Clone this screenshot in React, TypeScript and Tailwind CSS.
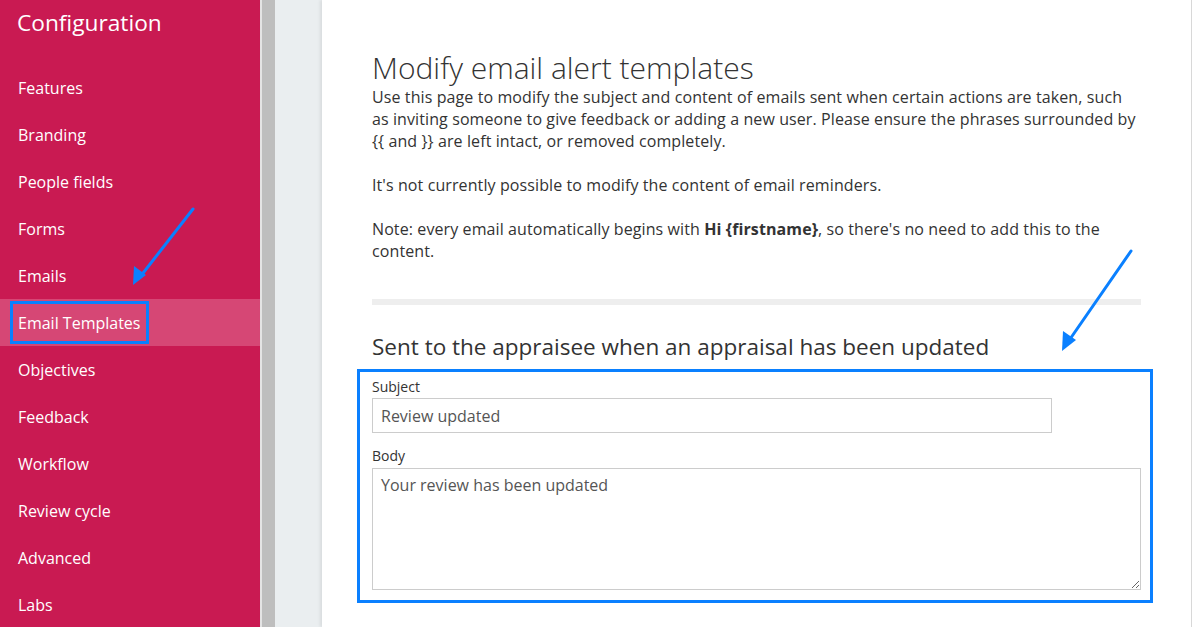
import React from "react";

const items = [
  "Features",
  "Branding",
  "People fields",
  "Forms",
  "Emails",
  "Email Templates",
  "Objectives",
  "Feedback",
  "Workflow",
  "Review cycle",
  "Advanced",
  "Labs",
];

export default function App() {
  return (
    <div
      className="relative flex h-[627px] w-[1192px] overflow-hidden bg-white"
      style={{ fontFamily: '"Open Sans", "Liberation Sans", sans-serif' }}
    >
      {/* Sidebar */}
      <aside className="w-[260px] shrink-0 bg-[#c91a52] text-white">
        <div className="h-16 pl-[17px] pt-[7px] text-[22.7px] leading-[32px]">Configuration</div>
        <nav>
          {items.map((it) => (
            <div
              key={it}
              className={`relative flex h-[47px] items-center pl-[18px] text-[16px] ${
                it === "Email Templates" ? "bg-[#d64775]" : ""
              }`}
            >
              {it}
              {it === "Email Templates" && (
                <span className="pointer-events-none absolute left-[10px] top-[2px] h-[43px] w-[139px] border-[3px] border-[#0a80ff]" />
              )}
            </div>
          ))}
        </nav>
      </aside>
      <div className="w-[2px] shrink-0 bg-[#e4e4e4]" />
      <div className="w-[13px] shrink-0 bg-[#bebebe]" />
      <div className="w-[47px] shrink-0 bg-[#eaeef0]" />

      {/* Main panel */}
      <main className="flex-1 border-r border-[#d8d8d8] bg-white px-[50px] pt-[50px] text-[#333] shadow-[-2px_0_3px_rgba(0,0,0,0.08)]">
        <h1 className="text-[30px] font-light leading-[36px] text-[#333]">Modify email alert templates</h1>
        <p className="text-[16px] leading-[22px] tracking-[0.1px]">
          Use this page to modify the subject and content of emails sent when certain actions are taken, such
          <br />
          as inviting someone to give feedback or adding a new user. Please ensure the phrases surrounded by
          <br />
          {"{{"} and {"}}"} are left intact, or removed completely.
        </p>
        <p className="mt-[22px] text-[16px] leading-[22px] tracking-[0.1px]">
          It's not currently possible to modify the content of email reminders.
        </p>
        <p className="mt-[22px] text-[16px] leading-[22px] tracking-[0.1px]">
          Note: every email automatically begins with <b className="font-bold">Hi {"{firstname}"}</b>, so there's no need to add
          this to the
          <br />
          content.
        </p>
        <div className="mt-[37px] h-[6px] bg-[#eeeeee]" />
        <h2 className="mt-[27px] text-[22.5px] leading-[30px] text-[#333]">
          Sent to the appraisee when an appraisal has been updated
        </h2>

        <div className="relative mt-[11px]">
          <span className="pointer-events-none absolute -left-[15px] -right-[12px] -top-[4px] -bottom-[13px] border-[3px] border-[#0a80ff]" />
          <label className="block pt-[4px] text-[14px] leading-[20px] text-[#333]">Subject</label>
          <input
            readOnly
            value="Review updated"
            className="mt-[1px] block h-[35px] w-[680px] border border-[#cccccc] px-[8px] text-[16px] text-[#555] outline-none"
            style={{ fontFamily: '"Open Sans", "Liberation Sans", sans-serif' }}
          />
          <label className="mt-[13px] block text-[14px] leading-[20px] text-[#333]">Body</label>
          <textarea
            readOnly
            value="Your review has been updated"
            className="mt-[2px] block h-[122px] w-full resize-y border border-[#cccccc] px-[8px] py-[5px] text-[16px] leading-[22px] text-[#555] outline-none"
            style={{ fontFamily: '"Open Sans", "Liberation Sans", sans-serif' }}
          />
        </div>
      </main>

      {/* Annotation arrows */}
      <svg className="pointer-events-none absolute left-0 top-0" width="1192" height="627" viewBox="0 0 1192 627">
        <g stroke="#0a80ff" strokeWidth="3" strokeLinecap="round" fill="#0a80ff">
          <line x1="193" y1="209" x2="140" y2="277" />
          <polygon points="133,285 134,266 146,275" stroke="none" />
          <line x1="1131" y1="251" x2="1068" y2="342" />
          <polygon points="1062,351 1063,331 1076,340" stroke="none" />
        </g>
      </svg>
    </div>
  );
}
